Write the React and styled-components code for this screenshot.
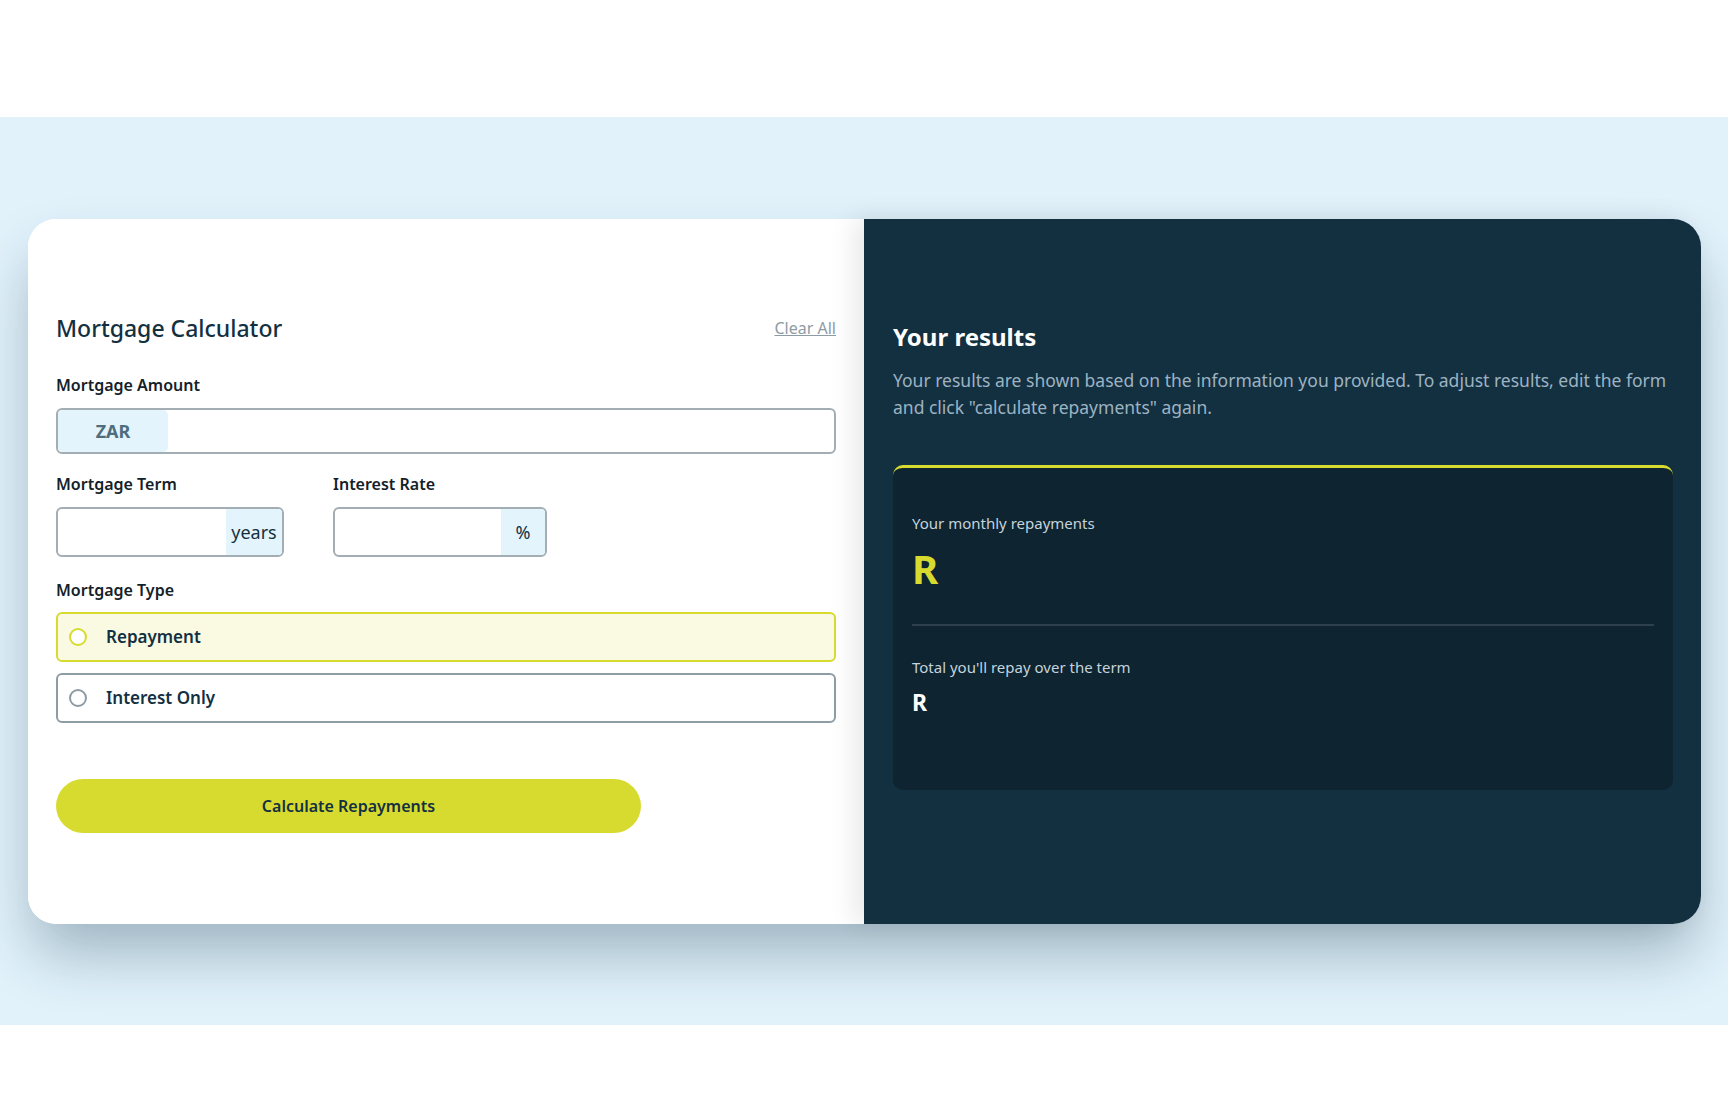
import React, { useState } from 'react';
import styled, { createGlobalStyle } from 'styled-components';

const GlobalStyle = createGlobalStyle`
    * {
        box-sizing: border-box;
    }

    body {
        margin: 0;
        background: #ffffff;
        font-family: "Noto Sans", "Open Sans", sans-serif;
        color: #133041;
    }
`;

/* Page */
const Page = styled.main`
    padding-top: 117px;
    padding-bottom: 92px;
`;

const Band = styled.section`
    display: flex;
    align-items: center;
    justify-content: center;
    height: 908px;
    background: #e1f2fb;
`;

const Card = styled.div`
    display: grid;
    grid-template-columns: 1fr 1fr;
    width: 1673px;
    height: 705px;
    border-radius: 28px;
    background: #ffffff;
    box-shadow: 0 34px 60px -6px rgba(14, 48, 68, 0.32);
`;

/* Form side */
const FormPanel = styled.form`
    display: flex;
    flex-direction: column;
    padding: 94px 28px 0 28.5px;
    border-radius: 28px 0 0 28px;
    background: #ffffff;
`;

const FormHeader = styled.div`
    display: flex;
    align-items: center;
    justify-content: space-between;
    margin-bottom: 31px;
`;

const Title = styled.h1`
    margin: 0;
    font-size: 23px;
    line-height: 30px;
    font-weight: 500;
    color: #133041;
`;

const ClearButton = styled.button`
    padding: 0;
    border: none;
    background: none;
    font-family: inherit;
    font-size: 16px;
    line-height: 22px;
    color: #8d9ba4;
    text-decoration: underline;
    cursor: pointer;
`;

const Field = styled.div`
    display: flex;
    flex-direction: column;
    width: ${props => props.$width || '100%'};
    margin-bottom: ${props => props.$gap || '19px'};
`;

const Label = styled.label`
    display: block;
    margin-bottom: ${props => props.$gap || '12px'};
    font-size: 16px;
    line-height: 22px;
    font-weight: 600;
    color: #13212a;
`;

const InputShell = styled.div`
    display: flex;
    flex-direction: ${props => (props.$suffix ? 'row-reverse' : 'row')};
    height: ${props => props.$height}px;
    border: 2px solid #a3aeb4;
    border-radius: 6px;
    overflow: hidden;
    background: #ffffff;
`;

const Affix = styled.span`
    display: flex;
    align-items: center;
    justify-content: center;
    flex: 0 0 ${props => props.$width}px;
    border-radius: ${props => (props.$rounded ? '5px' : '0')};
    background: #e3f4fc;
    font-size: 18px;
    font-weight: ${props => (props.$bold ? 700 : 400)};
    color: ${props => props.$color || '#133041'};
`;

const TextInput = styled.input`
    flex: 1;
    min-width: 0;
    padding: 0 14px;
    border: none;
    outline: none;
    background: transparent;
    font-family: inherit;
    font-size: 18px;
    font-weight: 700;
    color: #133041;
`;

const FieldRow = styled.div`
    display: flex;
    gap: 49px;
    margin-bottom: 3px;
`;

const RadioList = styled.div`
    display: flex;
    flex-direction: column;
    gap: 11px;
`;

const RadioOption = styled.label`
    display: flex;
    align-items: center;
    gap: 19px;
    height: 50px;
    padding: 0 11px;
    border: 2px solid ${props => (props.$active ? '#d8db2f' : '#8e9ca5')};
    border-radius: 6px;
    background: ${props => (props.$active ? '#f9fae1' : '#ffffff')};
    cursor: pointer;

    input {
        display: none;
    }
`;

const RadioDot = styled.span`
    width: 18px;
    height: 18px;
    border: 2px solid ${props => (props.$active ? '#d8db2f' : '#8e9ca5')};
    border-radius: 50%;
    background: #ffffff;
`;

const RadioText = styled.span`
    font-size: 17px;
    font-weight: 600;
    color: #133041;
`;

const SubmitButton = styled.button`
    width: 75%;
    height: 54px;
    margin-top: 56px;
    border: none;
    border-radius: 999px;
    background: #d8db2f;
    font-family: inherit;
    font-size: 16px;
    font-weight: 600;
    color: #133041;
    cursor: pointer;
`;

/* Results side */
const ResultsPanel = styled.section`
    position: relative;
    z-index: 1;
    display: flex;
    flex-direction: column;
    padding: 102px 28px 0 29px;
    border-radius: 0 28px 28px 0;
    background: #133041;
    box-shadow: -10px 0 26px rgba(0, 0, 0, 0.09);
`;

const ResultsTitle = styled.h2`
    margin: 0 0 14px;
    font-size: 24px;
    line-height: 32px;
    font-weight: 700;
    color: #ffffff;
`;

const ResultsText = styled.p`
    margin: 0 0 44px;
    font-size: 17.5px;
    line-height: 27px;
    color: #9db3c2;
`;

const ResultsBox = styled.div`
    padding: 44px 19px 74px;
    border-top: 3px solid #d8db2f;
    border-radius: 10px;
    background: #0e2431;
`;

const ResultLabel = styled.div`
    font-size: 15px;
    line-height: 22px;
    color: #c5d3dc;
`;

const ResultValue = styled.div`
    margin-top: ${props => (props.$large ? '11px' : '11px')};
    font-size: ${props => (props.$large ? '40px' : '23px')};
    line-height: 1.2;
    font-weight: 700;
    color: ${props => (props.$large ? '#d8db2f' : '#ffffff')};
`;

const Divider = styled.hr`
    margin: 31px 0 30px;
    border: none;
    border-top: 2px solid #2d404c;
`;

const mortgageTypes = [
    { id: 'repayment', label: 'Repayment' },
    { id: 'interest', label: 'Interest Only' }
];

export default function App() {
    const [type, setType] = useState('repayment');

    return (
        <Page>
            <GlobalStyle />
            <Band>
                <Card>
                    <FormPanel onSubmit={e => e.preventDefault()}>
                        <FormHeader>
                            <Title>Mortgage Calculator</Title>
                            <ClearButton type="button">Clear All</ClearButton>
                        </FormHeader>

                        <Field>
                            <Label htmlFor="amount">Mortgage Amount</Label>
                            <InputShell $height={46}>
                                <Affix $width={110} $bold $rounded $color="#4e6e7e">ZAR</Affix>
                                <TextInput id="amount" type="text" />
                            </InputShell>
                        </Field>

                        <FieldRow>
                            <Field $width="228px">
                                <Label htmlFor="term">Mortgage Term</Label>
                                <InputShell $height={50} $suffix>
                                    <Affix $width={56}>years</Affix>
                                    <TextInput id="term" type="text" />
                                </InputShell>
                            </Field>
                            <Field $width="214px">
                                <Label htmlFor="rate">Interest Rate</Label>
                                <InputShell $height={50} $suffix>
                                    <Affix $width={44}>%</Affix>
                                    <TextInput id="rate" type="text" />
                                </InputShell>
                            </Field>
                        </FieldRow>

                        <Field $gap="0">
                            <Label $gap="11px">Mortgage Type</Label>
                            <RadioList>
                                {mortgageTypes.map(option => (
                                    <RadioOption key={option.id} $active={type === option.id}>
                                        <input
                                            type="radio"
                                            name="type"
                                            checked={type === option.id}
                                            onChange={() => setType(option.id)}
                                        />
                                        <RadioDot $active={type === option.id} />
                                        <RadioText>{option.label}</RadioText>
                                    </RadioOption>
                                ))}
                            </RadioList>
                        </Field>

                        <SubmitButton type="submit">Calculate Repayments</SubmitButton>
                    </FormPanel>

                    <ResultsPanel>
                        <ResultsTitle>Your results</ResultsTitle>
                        <ResultsText>
                            Your results are shown based on the information you provided. To adjust results, edit the form
                            and click "calculate repayments" again.
                        </ResultsText>
                        <ResultsBox>
                            <ResultLabel>Your monthly repayments</ResultLabel>
                            <ResultValue $large>R</ResultValue>
                            <Divider />
                            <ResultLabel>Total you'll repay over the term</ResultLabel>
                            <ResultValue>R</ResultValue>
                        </ResultsBox>
                    </ResultsPanel>
                </Card>
            </Band>
        </Page>
    );
}
